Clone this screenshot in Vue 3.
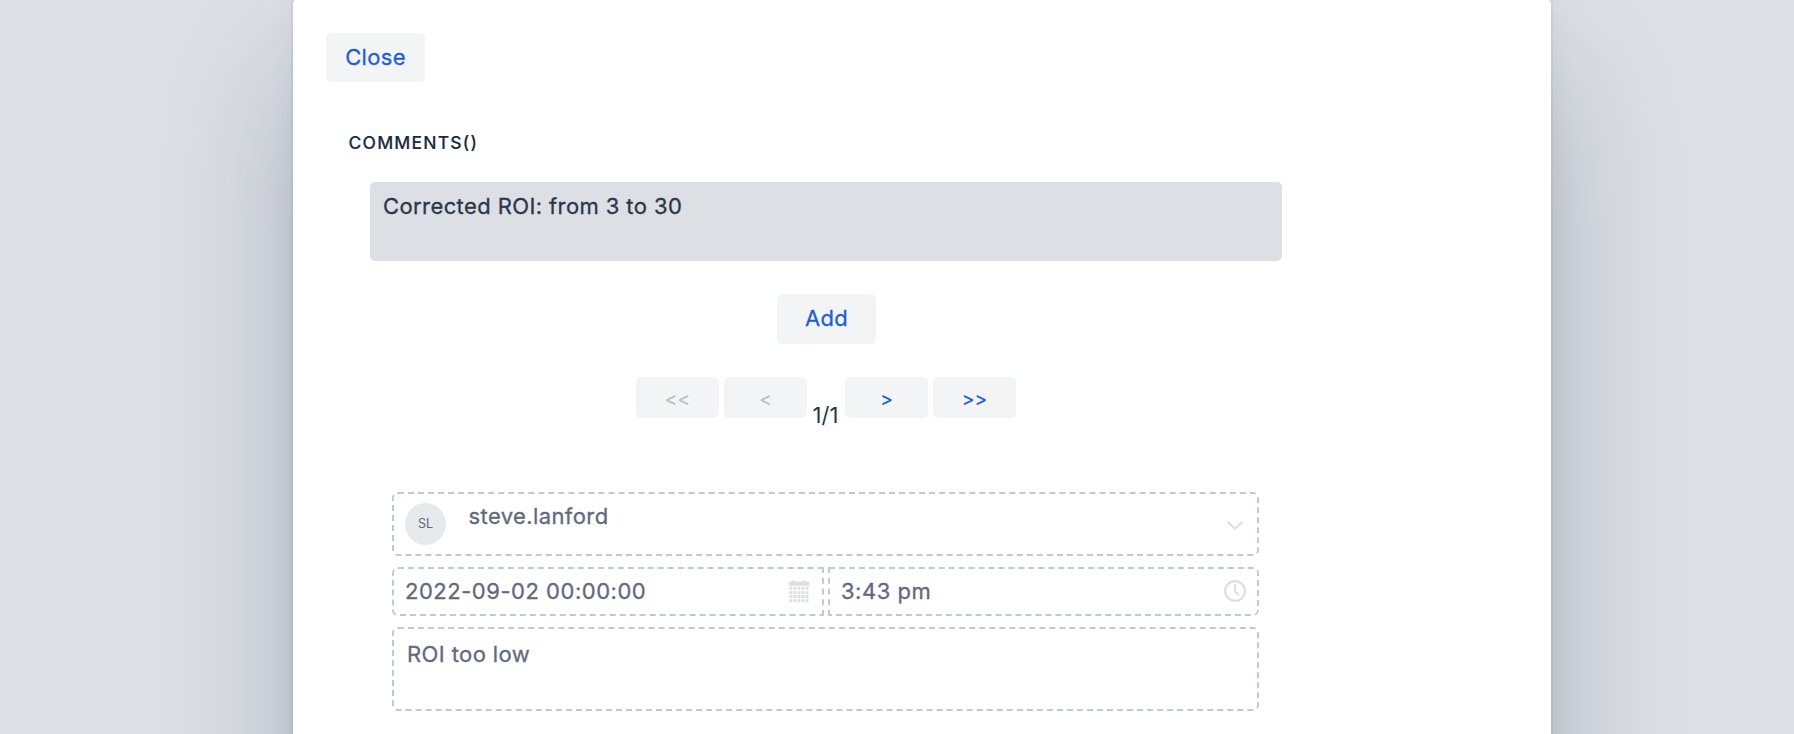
<script setup>
const pager = [
  { label: '<<', disabled: true },
  { label: '<', disabled: true },
  { label: '1/1', status: true },
  { label: '>' },
  { label: '>>' },
]
const columns = [0, 1, 2, 3, 4]
const rows = [0, 1, 2, 3]
</script>

<template>
  <div class="backdrop">
    <div class="dialog">
      <button class="btn close">Close</button>
      <h4 class="heading">Comments()</h4>
      <div class="editor">Corrected ROI: from 3 to 30</div>
      <button class="btn add">Add</button>
      <div class="pager">
        <template v-for="p in pager" :key="p.label">
          <span v-if="p.status" class="status">{{ p.label }}</span>
          <button v-else class="btn small" :disabled="p.disabled">{{ p.label }}</button>
        </template>
      </div>
      <div class="comment">
        <div class="field author">
          <span class="avatar">SL</span>
          <span class="name">steve.lanford</span>
          <svg class="icon chevron" width="18" height="12" viewBox="0 0 18 12">
            <path d="M2 2.200 9 8.800 16 2.200" />
          </svg>
        </div>
        <div class="when">
          <div class="field date">
            <span>2022-09-02 00:00:00</span>
            <svg class="icon" width="22" height="24" viewBox="0 0 22 24">
              <path class="solid" d="M2 2.500H3.500Q5 .1 6.500 2.500H14.500Q16 .1 17.500 2.500H20Q21.500 2.500 21.500 4V6.700H.5V4Q.5 2.500 2 2.500Z" />
              <template v-for="r in rows" :key="r">
                <rect v-for="c in columns" :key="c" class="solid" :x="1.5 + c * 4" :y="7.7 + r * 4.200" width="3" height="3" rx=".4" />
              </template>
            </svg>
          </div>
          <div class="field time">
            <span>3:43 pm</span>
            <svg class="icon clock" width="22" height="22" viewBox="0 0 22 22">
              <circle cx="11" cy="11" r="9.900" />
              <path d="M11 4.800V11.200L14.200 14.800" />
            </svg>
          </div>
        </div>
        <div class="field body">ROI too low</div>
      </div>
    </div>
  </div>
</template>

<style>
body {
  margin: 0;
  overflow: hidden;
}
</style>

<style scoped>
.backdrop {
  height: 734px;
  overflow: hidden;
  background: #dcdfe4;
  font-family: Inter, "Liberation Sans", sans-serif;
  font-size: 22px;
  font-weight: 400;
  line-height: 30px;
  letter-spacing: 0.4px;
  -webkit-text-stroke: 0.3px;
  color: #2a374a;
}
.dialog {
  box-sizing: border-box;
  width: 1258px;
  height: 900px;
  margin: -1px 0 0 293px;
  padding: 34px 33px;
  border-radius: 5px;
  background: #fff;
  box-shadow: 0 0 0 2px rgba(26, 46, 69, 0.05), 0 8px 33px -4px rgba(40, 50, 80, 0.06), 0 68px 130px -14px rgba(30, 44, 80, 0.31);
}
.btn {
  display: block;
  padding: 0;
  border: 0;
  border-radius: 5px;
  background: #f3f4f6;
  color: #1f5fd6;
  font: inherit;
  letter-spacing: 0.3px;
}
.btn:disabled {
  color: #bcc0ca;
}
.close {
  width: 99px;
  height: 49px;
  padding-bottom: 2px;
}
.heading {
  margin: 45px 0 0 22.500px;
  font-size: 17.500px;
  font-weight: 500;
  line-height: 32px;
  letter-spacing: 1.2px;
  -webkit-text-stroke: 0.12px;
  text-transform: uppercase;
  color: #1b2a3d;
}
.editor {
  box-sizing: border-box;
  width: 912px;
  height: 79px;
  margin: 23px 0 0 44px;
  padding: 9px 13px;
  border-radius: 5px;
  background: #dcdfe4;
}
.add {
  width: 99px;
  height: 50px;
  margin: 33px 0 0 451px;
  padding-bottom: 2px;
}
.pager {
  display: flex;
  gap: 5px;
  width: 380px;
  margin: 33px 0 0 310px;
}
.small {
  width: 83px;
  height: 41px;
  padding-top: 4px;
  font-size: 19px;
  font-weight: 500;
  letter-spacing: 0;
  -webkit-text-stroke: 0;
}
.status {
  width: 28px;
  padding-top: 23px;
  font-weight: 400;
  letter-spacing: 0;
  text-align: center;
  text-indent: -1px;
  -webkit-text-stroke: 0;
}
.comment {
  display: flex;
  flex-direction: column;
  gap: 11px;
  width: 867px;
  margin: 62px 0 0 66px;
  color: #616a7b;
}
.field {
  box-sizing: border-box;
  display: flex;
  border: 2px dashed #c4c8d2;
  border-radius: 6px;
}
.author {
  height: 64px;
  padding: 7px 13px 0 11px;
}
.avatar {
  width: 41px;
  height: 42px;
  margin-top: 2px;
  border-radius: 50%;
  background: #e7eaed;
  font-size: 12.500px;
  font-weight: 400;
  line-height: 41px;
  letter-spacing: 0;
  text-align: center;
  -webkit-text-stroke: 0;
}
.name {
  flex: 1;
  margin-left: 22.500px;
}
.chevron {
  margin-top: 18.500px;
}
.when {
  display: flex;
  gap: 4px;
}
.date,
.time {
  height: 49px;
  align-items: center;
  justify-content: space-between;
  padding: 0 12px 1px 11px;
  letter-spacing: 0.52px;
}
.date {
  width: 432px;
  border-radius: 6px 0 0 6px;
}
.time {
  width: 431px;
  padding-right: 11px;
  border-radius: 0 6px 6px 0;
}
.body {
  height: 84px;
  padding: 10px 13px;
}
.icon {
  flex: none;
  fill: none;
  stroke: #dcdfe4;
  stroke-width: 2.200;
  stroke-linecap: round;
  stroke-linejoin: round;
}
.solid {
  fill: #dcdfe4;
  stroke: none;
}
</style>
